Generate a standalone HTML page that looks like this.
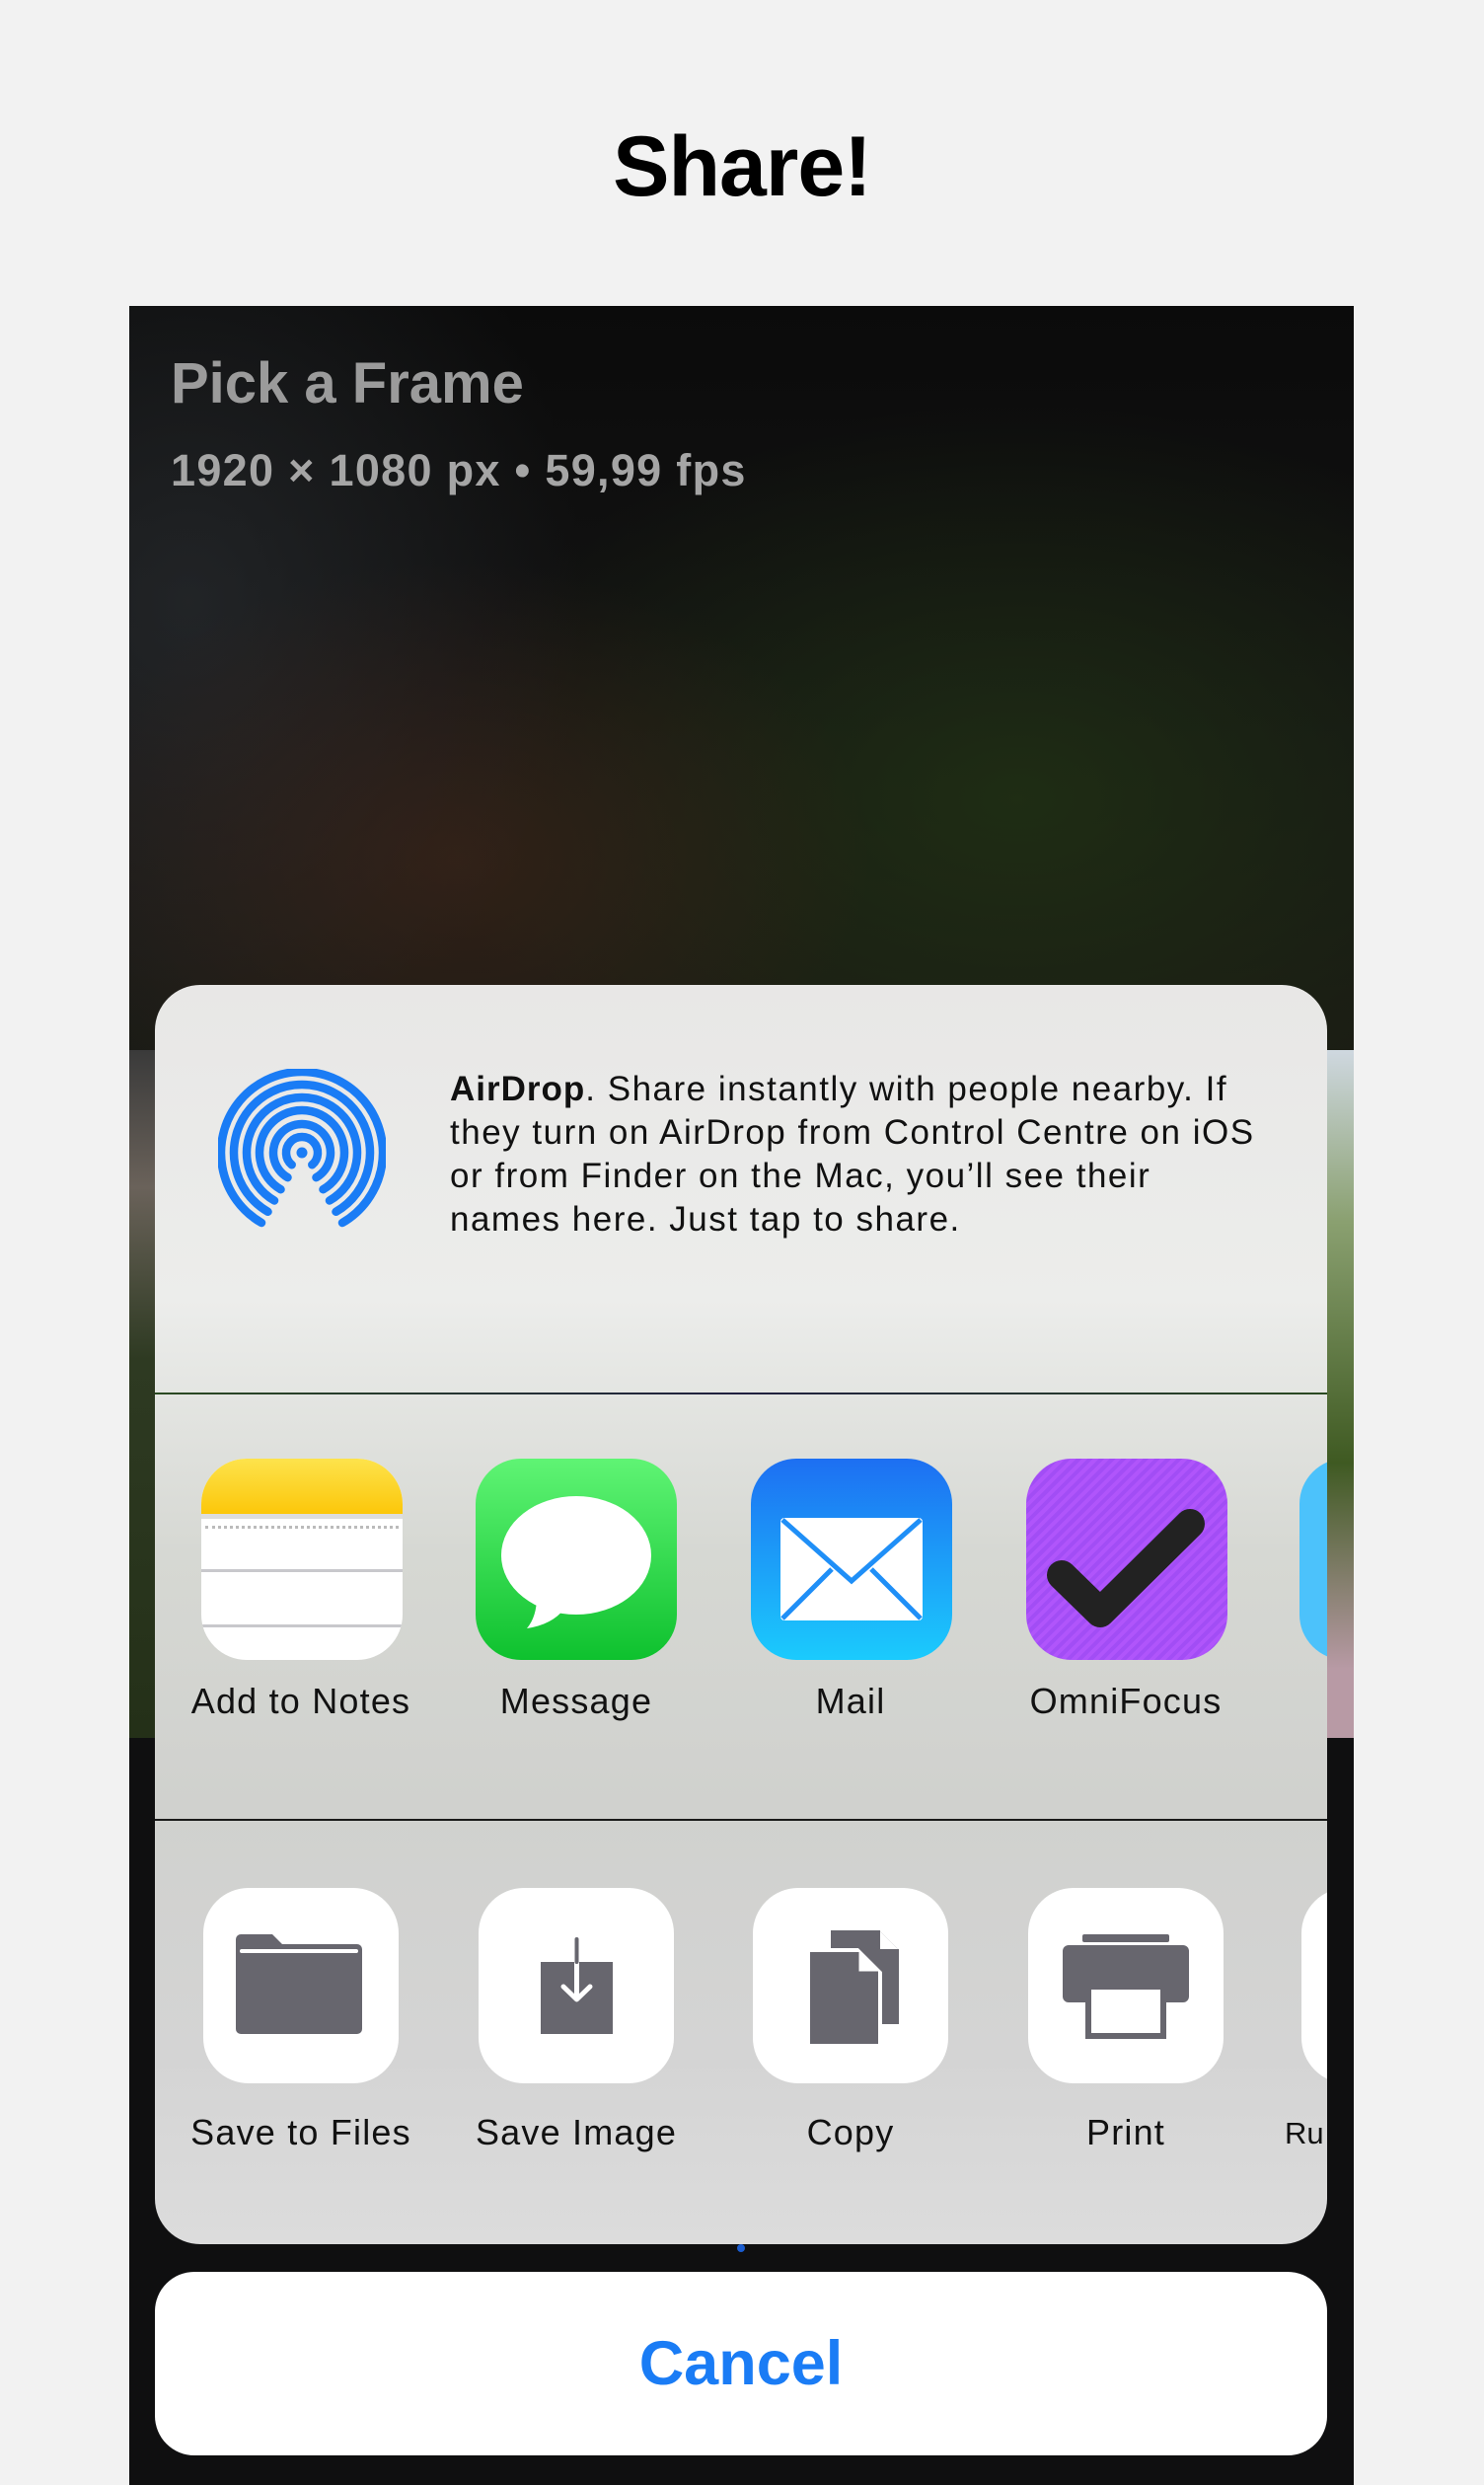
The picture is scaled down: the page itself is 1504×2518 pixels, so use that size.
<!DOCTYPE html>
<html><head><meta charset="utf-8"><style>
*{margin:0;padding:0;box-sizing:border-box}
body{width:1504px;height:2518px;background:#f2f2f2;position:relative;overflow:hidden;font-family:"Liberation Sans",sans-serif}
.abs{position:absolute}
#title{left:0;width:1504px;top:120px;text-align:center;font-weight:bold;font-size:86px;color:#000;letter-spacing:-1px}
#panel{left:131px;top:310px;width:1241px;height:2208px;background:#0d0d0d;overflow:hidden}
#sheet{left:157px;top:998px;width:1188px;height:1276px;border-radius:46px;overflow:hidden;background:linear-gradient(180deg,#e8e7e6 0%,#ecedeb 25%,#d6d8d3 45%,#d0d1ce 65%,#d4d4d4 85%,#dcdcdc 100%)}
.lab{position:absolute;width:260px;text-align:center;font-size:36px;color:#111;letter-spacing:1.2px;white-space:nowrap}
.icon{position:absolute;width:204px;height:204px;border-radius:46px;overflow:hidden;top:480px}
.tile{position:absolute;width:198px;height:198px;border-radius:46px;background:#fff;top:915px;overflow:hidden}
#cancel{left:157px;top:2302px;width:1188px;height:186px;border-radius:40px;background:#fff;text-align:center;line-height:186px;font-size:63px;font-weight:bold;color:#1a7cf5}
</style></head><body>
<div id="title" class="abs">Share!</div>
<div id="panel" class="abs">
  <div class="abs" style="left:0;top:0;width:1241px;height:754px;background:radial-gradient(ellipse 420px 300px at 330px 560px,rgba(70,40,25,.55),transparent),radial-gradient(ellipse 600px 400px at 900px 500px,rgba(35,55,20,.7),transparent),radial-gradient(ellipse 400px 500px at 60px 300px,rgba(50,55,60,.5),transparent),linear-gradient(180deg,#0b0b0b,#141414 60%,#1a1a14)"></div>
  <div class="abs" style="left:0;top:754px;width:1241px;height:697px;background:linear-gradient(180deg,#3a3a3a 0%,#6a625a 20%,#2e3a22 45%,#243018 100%)"></div>
  <div class="abs" style="left:1214px;top:754px;width:27px;height:697px;background:linear-gradient(180deg,#cfd8e0 0%,#8aa070 25%,#3f5a22 60%,#b89aa5 90%)"></div>
  <div class="abs" style="left:0;top:1451px;width:1241px;height:757px;background:#0f0f10"></div>
  <div class="abs" style="left:42px;top:45px;font-size:58px;font-weight:bold;color:#9b9b9b">Pick a Frame</div>
  <div class="abs" style="left:42px;top:141px;font-size:45px;font-weight:bold;color:#a5a5a5;letter-spacing:1.3px">1920 × 1080 px • 59,99 fps</div>
</div>
<div id="sheet" class="abs">
  <svg class="abs" style="left:64px;top:85px" width="170" height="170" viewBox="15 15 170 170">
    <g fill="none" stroke="#1a7cf5" stroke-width="8.5" stroke-linecap="round">
      <path d="M59 171A82 82 0 1 1 141 171"/>
      <path d="M65.5 159.8A69 69 0 1 1 134.5 159.8"/>
      <path d="M72 148.5A56 56 0 1 1 128 148.5"/>
      <path d="M78.5 137.2A43 43 0 1 1 121.5 137.2"/>
      <path d="M85.5 125.1A29 29 0 1 1 114.5 125.1"/>
      <path d="M89.7 112.3A16 16 0 1 1 110.3 112.3"/>
    </g>
    <circle cx="100" cy="100" r="5.5" fill="#1a7cf5"/>
  </svg>
  <div class="abs" style="left:299px;top:84px;width:900px;font-size:35px;line-height:44px;color:#111;letter-spacing:1.5px;white-space:nowrap">
    <b style="letter-spacing:1px">AirDrop</b>. Share instantly with people nearby. If<br>they turn on AirDrop from Control Centre on iOS<br>or from Finder on the Mac, you’ll see their<br>names here. Just tap to share.
  </div>
  <div class="abs" style="left:0;top:413px;width:1188px;height:2px;background:linear-gradient(90deg,#2a4a22,#202040 50%,#2a4a22)"></div>
  <div class="icon" style="left:47px;background:#fff">
    <div class="abs" style="left:0;top:0;width:204px;height:56px;background:linear-gradient(#fde34c,#fcc70a)"></div>
    <div class="abs" style="left:0;top:56px;width:204px;height:5px;background:#ddd"></div>
    <div class="abs" style="left:4px;top:68px;width:196px;border-top:3px dotted #bbb"></div>
    <div class="abs" style="left:0;top:112px;width:204px;height:3px;background:#c8c8cc"></div>
    <div class="abs" style="left:0;top:168px;width:204px;height:3px;background:#c8c8cc"></div>
  </div>
  <div class="icon" style="left:325px;background:linear-gradient(#5ff474,#0ec12e)">
    <svg width="204" height="204"><ellipse cx="102" cy="98" rx="76" ry="60" fill="#fff"/><path d="M62 140 Q62 160 52 172 Q78 168 90 152Z" fill="#fff"/></svg>
  </div>
  <div class="icon" style="left:604px;background:linear-gradient(#1d6ff2,#1bcbfd)">
    <svg width="204" height="204"><rect x="30" y="60" width="144" height="104" rx="4" fill="#fff"/><path d="M32 62 L102 124 L172 62 M32 162 L82 112 M172 162 L122 112" fill="none" stroke="#1f8ff7" stroke-width="5"/></svg>
  </div>
  <div class="icon" style="left:883px;background:repeating-linear-gradient(135deg,#b055fb 0 4px,#a24df5 4px 8px)">
    <svg width="204" height="204"><path d="M36 118 L75 156 L166 66" fill="none" stroke="#222" stroke-width="30" stroke-linecap="round" stroke-linejoin="round"/></svg>
  </div>
  <div class="icon" style="left:1160px;background:#4cc2fb"></div>
  <div class="lab" style="left:18px;top:705px">Add to Notes</div>
  <div class="lab" style="left:297px;top:705px">Message</div>
  <div class="lab" style="left:575px;top:705px">Mail</div>
  <div class="lab" style="left:854px;top:705px">OmniFocus</div>
  <div class="abs" style="left:0;top:845px;width:1188px;height:2px;background:#1a1a1a"></div>
  <div class="tile" style="left:49px"><svg width="198" height="198"><path d="M38 47 H70 L80 57 H156 A5 5 0 0 1 161 62 V143 A5 5 0 0 1 156 148 H38 A5 5 0 0 1 33 143 V52 A5 5 0 0 1 38 47Z" fill="#67666e"/><rect x="37" y="62" width="120" height="4" rx="2" fill="#fff"/></svg></div>
  <div class="tile" style="left:328px"><svg width="198" height="198"><rect x="63" y="75" width="73" height="73" fill="#67666e"/><path d="M99.5 52 V112 M86 100 L99.5 113 L113 100" fill="none" stroke="#fff" stroke-width="5" stroke-linecap="round" stroke-linejoin="round"/><path d="M99.5 52 V75" stroke="#67666e" stroke-width="4" stroke-linecap="round"/></svg></div>
  <div class="tile" style="left:606px"><svg width="198" height="198"><path d="M79 43 H128 L148 63 V138 H79Z" fill="#67666e"/><path d="M128 43 V63 H148" fill="#fff" stroke="#67666e" stroke-width="2"/><path d="M56 63 H106 L129 86 V160 H56Z" fill="#67666e" stroke="#fff" stroke-width="4"/><path d="M106 65 V86 H127" fill="#fff" stroke="#67666e" stroke-width="3"/></svg></div>
  <div class="tile" style="left:885px"><svg width="198" height="198"><rect x="55" y="47" width="88" height="8" rx="2" fill="#67666e"/><rect x="35" y="58" width="128" height="58" rx="6" fill="#67666e"/><rect x="58" y="97" width="82" height="56" fill="#67666e"/><rect x="64" y="103" width="70" height="44" fill="#fff"/></svg></div>
  <div class="tile" style="left:1162px"></div>
  <div class="lab" style="left:18px;top:1142px">Save to Files</div>
  <div class="lab" style="left:297px;top:1142px">Save Image</div>
  <div class="lab" style="left:575px;top:1142px">Copy</div>
  <div class="lab" style="left:854px;top:1142px">Print</div>
  <div class="abs" style="left:1145px;top:1146px;font-size:31px;color:#111">Ru</div>
</div>
<div class="abs" style="left:747px;top:2274px;width:8px;height:8px;border-radius:4px;background:#1a5ccf"></div>
<div id="cancel" class="abs">Cancel</div>
</body></html>
